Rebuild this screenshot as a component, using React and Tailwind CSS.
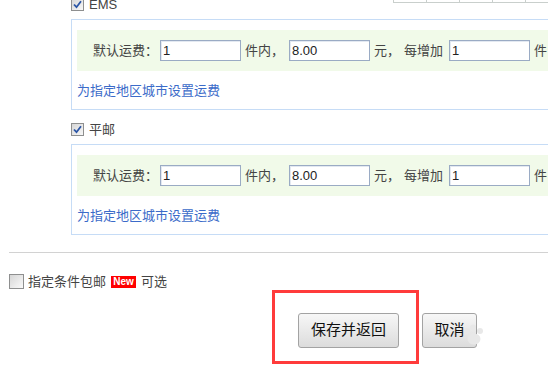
import React from "react";

const font = { fontFamily: '"Liberation Sans", "Noto Sans CJK SC", sans-serif' };

function Check({ checked }) {
  if (checked) {
    return (
      <span className="flex h-[13px] w-[13px] items-center justify-center border border-[#8e8f8f] bg-gradient-to-br from-[#d6d6d6] to-[#f8f8f8]">
        <svg width="9" height="9" viewBox="0 0 9 9">
          <path d="M1 4.5 L3.5 7.2 L8 1.2" fill="none" stroke="#2a55a6" strokeWidth="1.8" />
        </svg>
      </span>
    );
  }
  return (
    <span className="block h-[15px] w-[15px] border border-[#8e8f8f] bg-gradient-to-br from-[#d6d6d6] to-[#fafafa]" />
  );
}

function Field({ value }) {
  return (
    <div className="flex h-[21px] w-[81px] items-center border border-[#9aabc4] bg-white pl-[2px] text-[13px] text-[#222] shadow-[inset_1px_1px_0_#e3e9f1]">
      {value}
    </div>
  );
}

function FeeRow() {
  return (
    <div className="flex h-[41px] items-center bg-[#f1fae9] pl-[16px] text-[13px] text-[#444]">
      <span className="w-[67px]">默认运费：</span>
      <Field value="1" />
      <span className="ml-[4px]">件内，</span>
      <span className="ml-[5px]">
        <Field value="8.00" />
      </span>
      <span className="ml-[4px]">元，</span>
      <span className="ml-[4px]">每增加</span>
      <span className="ml-[6px]">
        <Field value="1" />
      </span>
      <span className="ml-[4px]">件</span>
    </div>
  );
}

function Section({ name }) {
  return (
    <div className="pl-[71px]">
      <div className="flex h-[34px] items-center gap-[5px] pt-[5px] text-[13px] text-[#444]">
        <Check checked />
        <span>{name}</span>
      </div>
      <div className="h-[91px] w-[500px] border border-[#c6dcf6] px-[5px] pt-[10px]">
        <FeeRow />
        <div className="mt-[13px] text-[13px] leading-[14px] text-[#3b6bc9]">为指定地区城市设置运费</div>
      </div>
    </div>
  );
}

export default function App() {
  return (
    <div className="relative h-[383px] w-[548px] overflow-hidden bg-white" style={font}>
      <div className="ml-[393px] flex h-[3px]">
        {[0, 1, 2, 3, 4].map((i) => (
          <div key={i} className="h-[3px] w-[33px] shrink-0 border-b border-l border-[#c9cfcc]" />
        ))}
      </div>
      <div className="-mt-[18px]">
        <Section name="EMS" />
        <Section name="平邮" />
      </div>

      <div className="ml-[9px] mt-[17px] h-px bg-[#d2d2d2]" />

      <div className="mt-[21px] flex h-[15px] items-center pl-[9px] text-[13px] text-[#444]">
        <Check />
        <span className="ml-[4px]">指定条件包邮</span>
        <span className="ml-[5px] flex h-[12px] w-[25px] items-center justify-center bg-[#ff0000] text-[10px] font-bold leading-none text-white">
          New
        </span>
        <span className="ml-[5px]">可选</span>
      </div>

      <div className="mt-px flex items-start">
        <div className="ml-[272px] h-[74px] w-[147px] border-[3px] border-[#ff3b3b] pl-[23px] pt-[20px]">
          <button className="h-[35px] w-[101px] rounded-[3px] border border-[#a3a3a3] bg-gradient-to-b from-[#f7f7f7] to-[#dcdcdc] text-[15px] text-[#111]">
            保存并返回
          </button>
        </div>
        <button className="ml-[3px] mt-[23px] h-[35px] w-[55px] rounded-[3px] border border-[#a3a3a3] bg-gradient-to-b from-[#f7f7f7] to-[#dcdcdc] text-[15px] text-[#111]">
          取消
        </button>
      </div>

      <svg width="24" height="22" viewBox="0 0 24 22" className="pointer-events-none absolute left-[462px] top-[324px]">
        <circle cx="5" cy="7" r="3" fill="#e8e8e8" />
        <circle cx="11" cy="3.5" r="3" fill="#e8e8e8" />
        <circle cx="18" cy="7" r="3" fill="#e8e8e8" />
        <ellipse cx="12" cy="15" rx="6.5" ry="5.5" fill="#e8e8e8" />
      </svg>
    </div>
  );
}
